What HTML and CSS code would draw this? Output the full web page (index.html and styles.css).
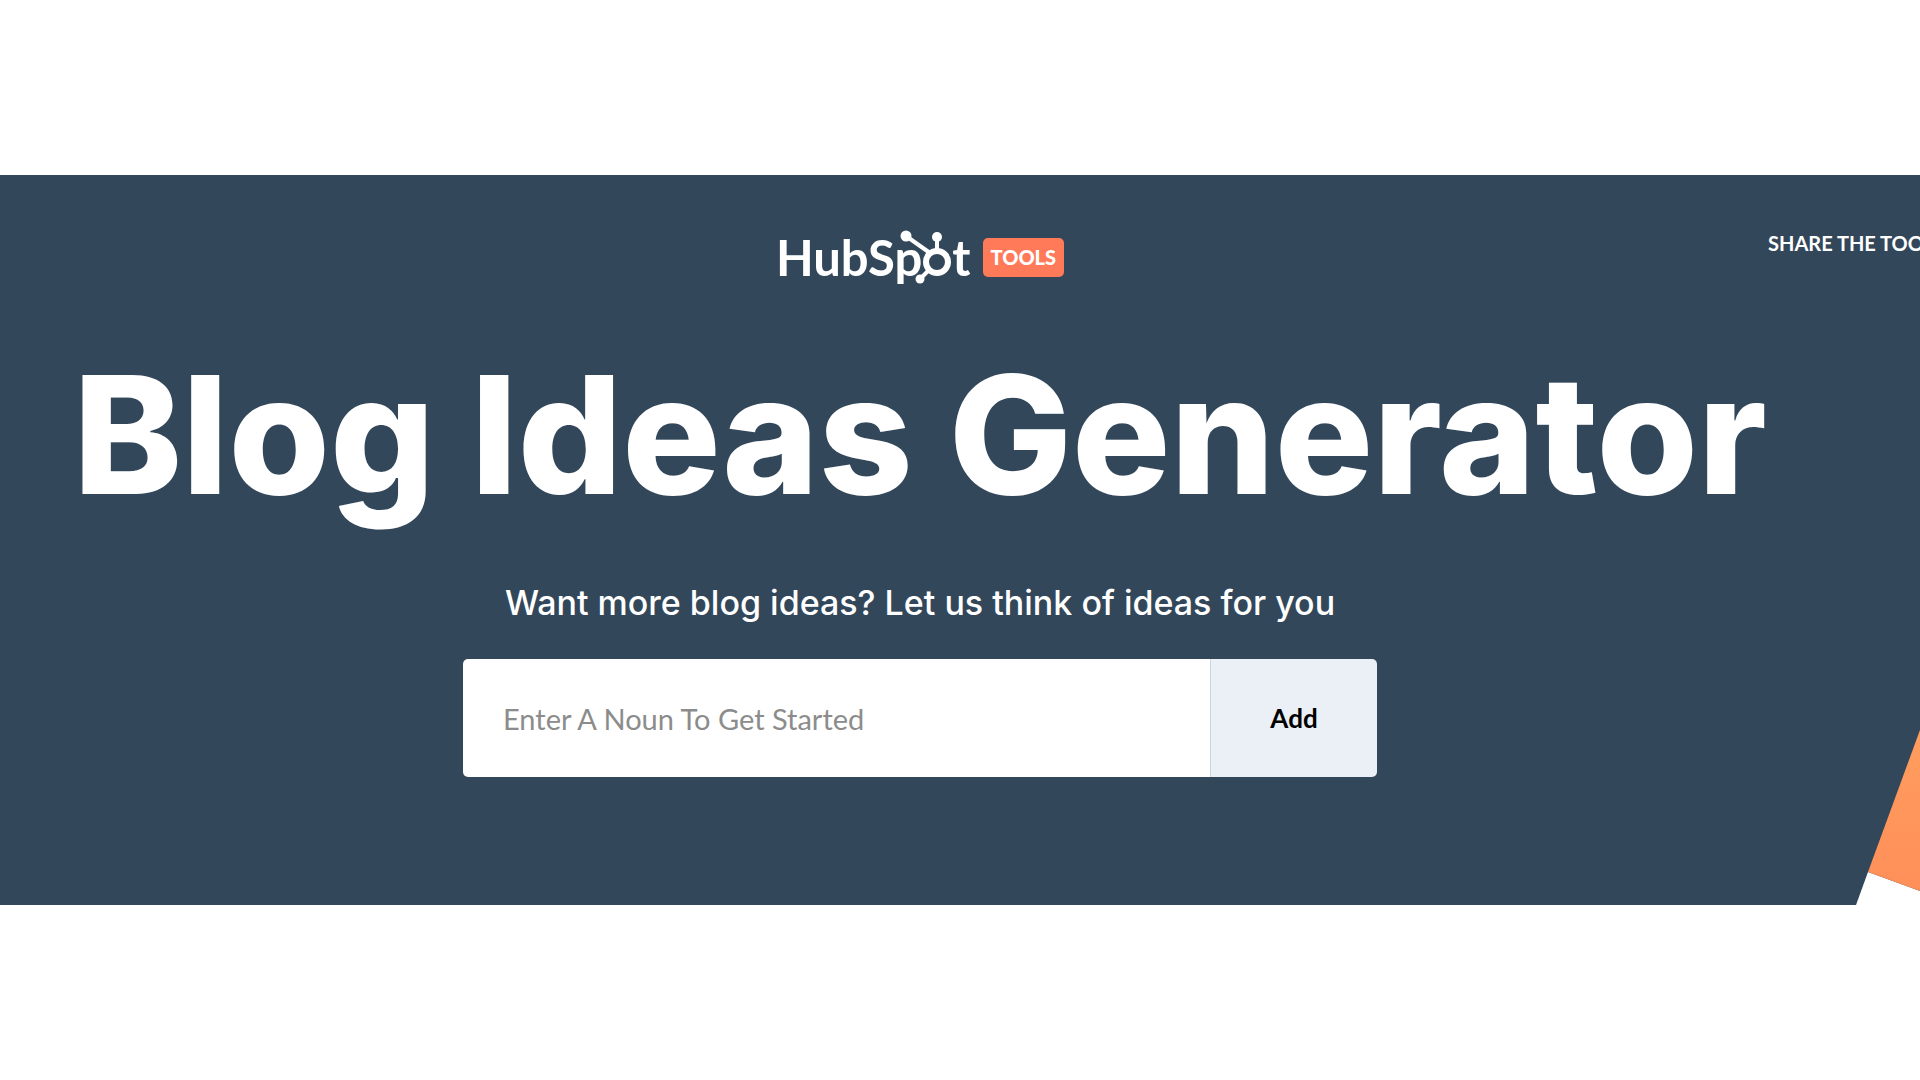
FILE: index.html
```
<!DOCTYPE html>
<html lang="en">
<head>
    <meta charset="UTF-8">
    <meta name="viewport" content="width=device-width, initial-scale=1.0">
    <title>Blog Ideas Generator</title>
    <link rel="stylesheet" href="styles.css">
</head>
<body>
    <main class="hero">
        <header class="header">
            <a class="brand" href="#">
                <span class="wordmark">HubSp<svg class="sprocket" viewBox="0 0 30 50" role="img" aria-label="o">
                    <circle cx="15" cy="31" r="11" fill="none" stroke="#fff" stroke-width="6"/>
                    <path d="M-16 5 L8 22 M15 7 V20 M-2 48 L7 39" fill="none" stroke="#fff" stroke-width="4"/>
                    <circle cx="-16" cy="5" r="5.5" fill="#fff"/>
                    <circle cx="15" cy="6" r="5" fill="#fff"/>
                    <circle cx="-2" cy="48" r="4.5" fill="#fff"/>
                </svg>t</span>
                <span class="badge">TOOLS</span>
            </a>
            <a class="share" href="#">SHARE THE TOOL</a>
        </header>

        <h1>Blog Ideas Generator</h1>

        <form class="idea-form">
            <label for="noun">Want more blog ideas? Let us think of ideas for you</label>
            <div class="field">
                <input type="text" id="noun" placeholder="Enter A Noun To Get Started">
                <button type="button">Add</button>
            </div>
        </form>

        <svg class="corner" viewBox="0 0 64 175" aria-hidden="true">
            <defs>
                <linearGradient id="orange" x1="0" y1="0" x2="0" y2="1">
                    <stop offset="0" stop-color="#ff9d5e"/>
                    <stop offset="1" stop-color="#ff8f59"/>
                </linearGradient>
            </defs>
            <path d="M0 175 L12 142 L64 161 V175 Z" fill="#fff"/>
            <path d="M12 142 L64 0 V161 Z" fill="url(#orange)"/>
        </svg>
    </main>
</body>
</html>
```

FILE: styles.css
```
* {
    box-sizing: border-box;
}
body {
    margin: 0;
    min-height: 100vh;
    display: flex;
    flex-direction: column;
    justify-content: center;
    background-color: #fff;
    font-family: Lato, sans-serif;
}
.hero {
    position: relative;
    overflow: hidden;
    padding: 52px 80px 128px 0;
    background-color: #33475b;
    color: #fff;
}
.header {
    display: grid;
    grid-template-columns: 1fr auto 1fr;
    align-items: start;
}
.brand {
    grid-column: 2;
    display: flex;
    align-items: center;
    gap: 12px;
    color: #fff;
    text-decoration: none;
}
.wordmark {
    font-size: 49px;
    font-weight: 700;
    line-height: 60px;
}
.sprocket {
    width: 30px;
    height: 50px;
    overflow: visible;
    vertical-align: -5px;
}
.badge {
    padding: 0 8px;
    border-radius: 5px;
    background-color: #ff7a59;
    font-size: 20px;
    font-weight: 900;
    line-height: 39px;
}
.share {
    justify-self: end;
    width: 72px;
    margin-top: 4px;
    color: #fff;
    font-size: 20px;
    font-weight: 700;
    line-height: 24px;
    text-decoration: none;
    white-space: nowrap;
}
h1 {
    margin: 48px 0 0;
    font-family: Inter, sans-serif;
    font-size: 164px;
    font-weight: 800;
    line-height: 200px;
    text-align: center;
    white-space: nowrap;
}
.idea-form {
    width: 914px;
    max-width: 100%;
    margin: 46px auto 0;
}
.idea-form label {
    display: block;
    font-family: Inter, sans-serif;
    font-size: 34px;
    font-weight: 500;
    line-height: 44px;
    text-align: center;
}
.field {
    display: flex;
    height: 118px;
    margin-top: 34px;
    border-radius: 5px;
    overflow: hidden;
}
.field input {
    flex: 1;
    min-width: 0;
    padding: 0 40px;
    border: none;
    background-color: #fff;
    color: #33475b;
    font: 400 29px Lato, sans-serif;
}
.field input::placeholder {
    color: #8c8c8c;
}
.field button {
    width: 167px;
    border: none;
    border-left: 1px solid #cbd6e2;
    background-color: #eaf0f6;
    color: #000;
    font: 700 26px Lato, sans-serif;
    cursor: pointer;
}
.corner {
    position: absolute;
    right: 0;
    bottom: 0;
    width: 64px;
    height: 175px;
}
```
